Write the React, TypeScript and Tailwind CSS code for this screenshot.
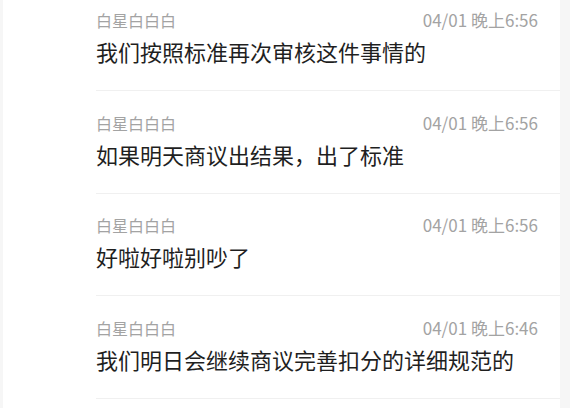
import React from "react";

const rows = [
  { name: "白星白白白", time: "04/01 晚上6:56", text: "我们按照标准再次审核这件事情的" },
  { name: "白星白白白", time: "04/01 晚上6:56", text: "如果明天商议出结果，出了标准" },
  { name: "白星白白白", time: "04/01 晚上6:56", text: "好啦好啦别吵了" },
  { name: "白星白白白", time: "04/01 晚上6:46", text: "我们明日会继续商议完善扣分的详细规范的" },
];

export default function App() {
  return (
    <div
      className="flex w-[570px] h-[408px] overflow-hidden bg-[#f6f6f6]"
      style={{ fontFamily: '"Noto Sans CJK SC", "Noto Sans", sans-serif' }}
    >
      <div className="w-[3px] shrink-0 bg-[#f6f6f6]" />
      <div className="flex-1 bg-white pl-[93px]">
        <div className="-mt-[11.5px] flex flex-col">
          {rows.map((r, i) => (
            <div key={i} className="border-b border-[#f0f0f0] pt-[20.5px] pb-[24px] pl-0 pr-[22px]">
              <div className="flex justify-between items-center h-[22px] leading-[22px] text-[16px] text-[#a3a3a3]">
                <span>{r.name}</span>
                <span className="text-[17px]">{r.time}</span>
              </div>
              <div className="mt-[5px] h-[30px] leading-[30px] text-[22px] text-[#1f1f1f]">{r.text}</div>
            </div>
          ))}
        </div>
      </div>
      <div className="w-[10px] shrink-0 bg-[#f6f6f6]" />
    </div>
  );
}
